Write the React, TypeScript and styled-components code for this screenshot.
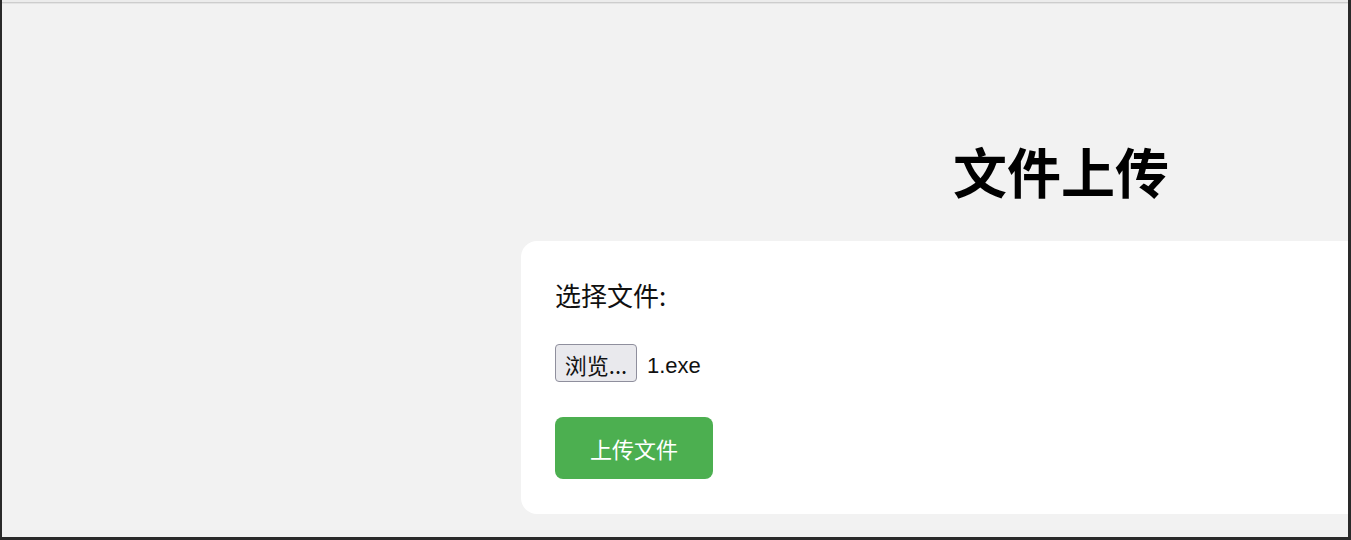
import React from "react";
import styled, { createGlobalStyle } from "styled-components";

const Global = createGlobalStyle`
  html, body { margin: 0; padding: 0; background: #f2f2f2; }
  body { font-family: "Liberation Sans", "Noto Sans CJK SC", sans-serif; color: #111; }
  * { box-sizing: border-box; }
`;

const Frame = styled.div`
  width: 1351px;
  height: 540px;
  overflow: hidden;
  background: #f2f2f2;
  border-left: 2px solid #2a2a2a;
  border-right: 3px solid #2a2a2a;
  border-bottom: 3px solid #2a2a2a;
  display: flex;
  flex-direction: column;
`;

const TopEdge = styled.div`
  height: 4px;
  flex: none;
  background: linear-gradient(#ececec 0 2px, #cdcdcd 2px 3px, #e4e4e4 3px 4px);
`;

const Main = styled.main`
  margin-left: 519px;
  width: 1080px;
  flex: none;
  display: flex;
  flex-direction: column;
`;

const Heading = styled.h1`
  margin: 135px 0 38px;
  font-size: 54px;
  line-height: 64px;
  font-weight: 700;
  text-align: center;
  color: #000;
  font-family: "Noto Sans CJK SC", sans-serif;
`;

const Card = styled.form`
  background: #fff;
  border-radius: 16px;
  padding: 34px 34px 35px;
  display: flex;
  flex-direction: column;
  align-items: flex-start;
`;

const Label = styled.label`
  font-size: 26px;
  line-height: 40px;
  font-family: "Noto Sans CJK SC", sans-serif;
  color: #111;
`;

const FileRow = styled.div`
  margin-top: 29px;
  display: flex;
  align-items: center;
  gap: 10px;
`;

const BrowseButton = styled.button`
  height: 38px;
  width: 82px;
  padding: 2px 0 0;
  background: #e9e9ed;
  border: 1px solid #8f8f9d;
  border-radius: 4px;
  font-size: 22px;
  font-family: "Noto Sans CJK SC", sans-serif;
  color: #111;
  line-height: 1;
`;

const FileName = styled.span`
  padding-top: 6px;
  font-size: 22px;
  font-family: "Liberation Sans", sans-serif;
  color: #111;
`;

const Submit = styled.button`
  margin-top: 35px;
  width: 158px;
  height: 62px;
  border: none;
  border-radius: 8px;
  background: #4caf50;
  color: #fff;
  font-size: 22px;
  font-family: "Noto Sans CJK SC", sans-serif;
`;

export default function App() {
  return (
    <>
      <Global />
      <Frame>
        <TopEdge />
        <Main>
          <Heading>文件上传</Heading>
          <Card onSubmit={(e) => e.preventDefault()}>
            <Label>选择文件:</Label>
            <FileRow>
              <BrowseButton type="button">浏览...</BrowseButton>
              <FileName>1.exe</FileName>
            </FileRow>
            <Submit type="submit">上传文件</Submit>
          </Card>
        </Main>
      </Frame>
    </>
  );
}
